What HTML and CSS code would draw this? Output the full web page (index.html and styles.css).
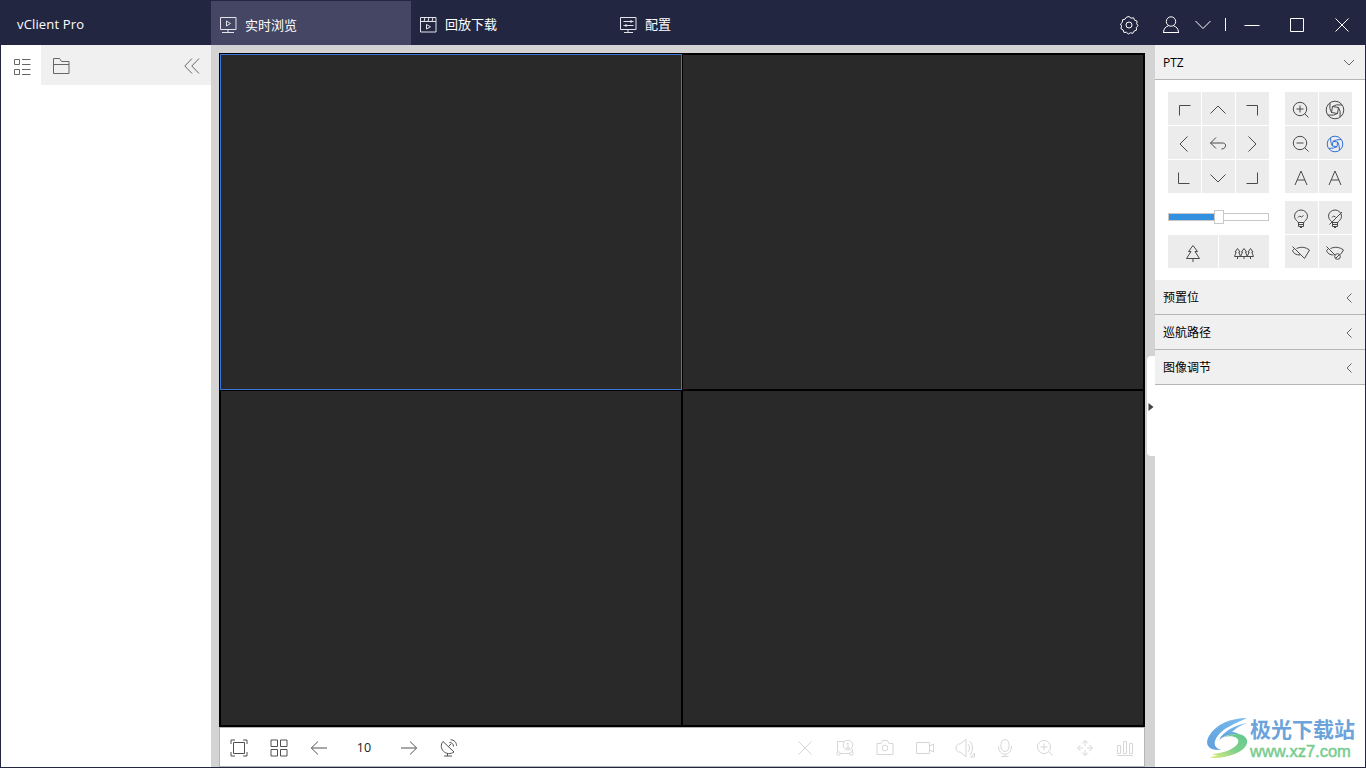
FILE: index.html
```html
<!DOCTYPE html>
<html lang="zh-CN">
<head>
    <meta charset="UTF-8">
    <title>vClient Pro</title>
    <link rel="stylesheet" href="styles.css">
</head>
<body>
<div class="window">

    <header class="titlebar">
        <div class="brand">vClient Pro</div>
        <nav class="tabs">
            <a class="tab active">
                <svg width="18" height="18" viewBox="0 0 18 18"><path d="M1.500 1.500h15.500v12h-15.500zM9 14v2M3 16.500h12M7.500 5v5l4-2.500z"/></svg>
                <span>实时浏览</span>
            </a>
            <a class="tab">
                <svg width="18" height="18" viewBox="0 0 18 18"><path d="M1.500 1.500h15.500v14.500h-15.500zM1.500 5.500h15.500M5 5.500l1-4M9 5.500l1-4M13 5.500l1-4M7.500 8.500v4.500l4-2.200z"/></svg>
                <span>回放下载</span>
            </a>
            <a class="tab">
                <svg width="18" height="18" viewBox="0 0 18 18"><path d="M1.500 1.500h15.500v12h-15.500zM9 14v2M5 16.500h9M4.500 5.500h10M4.500 9.500h10M12 4v3M7 8v3"/></svg>
                <span>配置</span>
            </a>
        </nav>
        <div class="controls">
            <svg class="gear" width="20" height="20" viewBox="0 0 20 20"><path d="M10 1.500l2 1.700 2.600-.4 1 2.400 2.500 1-.4 2.500 1.300 2-1.700 1.900.2 2.500-2.400 1-1.300 2.200-2.500-.5-2 1.200-1.800-1.700-2.600.1-.8-2.500-2.200-1.300.7-2.400-1.100-2.200 1.900-1.700.1-2.500 2.500-.6 1.500-2z"/><circle cx="10" cy="10" r="3"/></svg>
            <svg class="user" width="18" height="18" viewBox="0 0 18 18"><circle cx="9" cy="5.500" r="4.700"/><path d="M1.500 16.500c0-4 2.500-6 5-6.700M16.500 16.500c0-4-2.500-6-5-6.700M1 16.500h16"/></svg>
            <svg class="drop" width="16" height="10" viewBox="0 0 16 10"><path d="M.5 1l7.500 7.500L15.500 1"/></svg>
            <span class="divider"></span>
            <svg class="min" width="16" height="16" viewBox="0 0 16 16"><path d="M.5 8.500h15"/></svg>
            <svg class="max" width="14" height="14" viewBox="0 0 14 14"><path d="M.5 .5h13v13h-13z"/></svg>
            <svg class="close" width="14" height="14" viewBox="0 0 14 14"><path d="M.5 .5l13 13M13.500 .5l-13 13"/></svg>
        </div>
    </header>

    <div class="content">
        <aside class="devices">
            <div class="device-tabs">
                <div class="device-tab active">
                    <svg width="18" height="18" viewBox="0 0 18 18"><path d="M1.500 1.500h5v5h-5zM1.500 11.500h5v5h-5zM9 1.500h8.500M9 6.500h8.500M9 11.500h8.500M9 16.500h8.500"/></svg>
                </div>
                <div class="device-tab">
                    <svg width="18" height="18" viewBox="0 0 18 18"><path d="M1.500 16.500v-15h6l2 3h7.500v12zM1.500 7.500h15.500"/></svg>
                </div>
                <svg class="collapse" width="16" height="16" viewBox="0 0 16 16"><path d="M8 .5L.8 8l7.200 7.500M15 .5L7.800 8l7.200 7.500"/></svg>
            </div>
        </aside>

        <main class="live">
            <div class="video-grid">
                <div class="video selected"></div>
                <div class="video"></div>
                <div class="video"></div>
                <div class="video"></div>
            </div>
            <div class="toolbar">
                <div class="tools">
                    <svg width="18" height="18" viewBox="0 0 18 18"><path d="M3.500 3.500h11v11h-11zM1 5V1H5M13 1h4V5M17 13v4H13M5 17H1V13"/></svg>
                    <svg width="18" height="18" viewBox="0 0 18 18"><path d="M1 1h6.500v6.500h-6.500zM10.500 1h6.500v6.500h-6.500zM1 10.500h6.500v6.500h-6.500zM10.500 10.500h6.500v6.500h-6.500z"/></svg>
                    <svg width="18" height="18" viewBox="0 0 18 18"><path d="M17 9H1.500M8 2.500L1.300 9 8 15.500"/></svg>
                    <span class="page">10</span>
                    <svg width="18" height="18" viewBox="0 0 18 18"><path d="M1 9h15.500M10 2.500L16.700 9 10 15.500"/></svg>
                    <svg width="18" height="18" viewBox="0 0 18 18"><path d="M3 2.500C.5 5.500.8 9.500 3.500 12.300s7 3 10.500.7zM7.500 14.500v2.500M4 17h8M8.500 7.500l2.500-2.500M9.500 3.500c2.500 0 4 1.500 4 4M10.500.8c3.700 0 6 2.500 6 6"/></svg>
                </div>
                <div class="tools disabled">
                    <svg width="18" height="18" viewBox="0 0 18 18"><path d="M2.500 2.500l13 13M15.500 2.500l-13 13"/></svg>
                    <svg width="18" height="18" viewBox="0 0 18 18"><path d="M8 2.500H1.500v10M16.500 10v3M4 14.500h10M10.500 5l1.500-1v5M10 9h4"/><circle cx="12" cy="6" r="4.800"/><circle cx="2.500" cy="14.500" r="1.700"/><circle cx="15.500" cy="14.500" r="1.700"/></svg>
                    <svg width="18" height="18" viewBox="0 0 18 18"><path d="M1 4.500h4l1.500-3h5l1.500 3h4v11H1z"/><circle cx="9" cy="9" r="2.800"/></svg>
                    <svg width="20" height="18" viewBox="0 0 20 18"><path d="M1.500 3.500h13v11h-13zM14.500 7l4-2v8l-4-2z"/></svg>
                    <svg width="20" height="20" viewBox="0 0 20 20"><path d="M11 1.500v17L5 14H3.500C.2 12 .2 8 3.500 6H5zM13 6c2 2 2 6 0 8M14.500 3c4 3.500 4 10.500 0 14M19.500 15v4h-4z"/></svg>
                    <svg width="18" height="18" viewBox="0 0 18 18"><path d="M9 .5c-5.500 0-5.500 12 0 12s5.500-12 0-12zM2.500 7c0 11 13 11 13 0M9 15.500v2M5.500 17.500h7"/></svg>
                    <svg width="18" height="18" viewBox="0 0 18 18"><circle cx="8" cy="8" r="6.500"/><path d="M12.800 12.800l3.700 3.700M4.500 8h7M8 4.500v7"/></svg>
                    <svg width="18" height="18" viewBox="0 0 18 18"><path d="M9 2v5M9 11v5M2 9h5M11 9h5M6 4.500l3-3 3 3M6 13.500l3 3 3-3M4.500 6l-3 3 3 3M13.500 6l3 3-3 3"/></svg>
                    <svg width="18" height="18" viewBox="0 0 18 18"><path d="M1.500 6.500h3v8h-3zM7.500 2.500h3v12h-3zM13.500 4.500h3v10h-3zM1 16.500h16"/></svg>
                </div>
            </div>
            <div class="panel-handle">
                <svg width="6" height="8" viewBox="0 0 6 8"><path d="M.5 0v8L5.500 4z"/></svg>
            </div>
        </main>

        <aside class="side">
            <div class="section open">
                <span>PTZ</span>
                <svg width="12" height="8" viewBox="0 0 12 8"><path d="M1 1l5 5 5-5"/></svg>
            </div>
            <div class="ptz">
                <div class="ptz-left">
                    <div class="pad">
                        <button><svg viewBox="0 0 20 20"><path d="M5.500 15.500v-10h11"/></svg></button>
                        <button><svg viewBox="0 0 20 20"><path d="M2.500 13.500L10 6l7.500 7.500"/></svg></button>
                        <button><svg viewBox="0 0 20 20"><path d="M4.500 5.500h11v10"/></svg></button>
                        <button><svg viewBox="0 0 20 20"><path d="M13.500 2.500L6 10l7.500 7.500"/></svg></button>
                        <button><svg viewBox="0 0 20 20"><path d="M8 3.500L2.500 9 8 14.500M2.500 9h12c4.500 0 4 6-1 6"/></svg></button>
                        <button><svg viewBox="0 0 20 20"><path d="M6.500 2.500L14 10l-7.500 7.500"/></svg></button>
                        <button><svg viewBox="0 0 20 20"><path d="M4.500 4.500v11h11"/></svg></button>
                        <button><svg viewBox="0 0 20 20"><path d="M2.500 6.500L10 14l7.500-7.500"/></svg></button>
                        <button><svg viewBox="0 0 20 20"><path d="M4.500 15.500h11v-11"/></svg></button>
                    </div>
                    <div class="speed">
                        <div class="speed-fill"></div>
                        <div class="speed-thumb"></div>
                    </div>
                    <div class="focus">
                        <button><svg viewBox="0 0 20 20"><path d="M10 2.500L5.500 8.500H8L3.500 15.500h13L12 8.500h2.500zM10 15.500v3.500"/></svg></button>
                        <button><svg viewBox="0 0 20 20"><path d="M3.500 5.500L1 9h1.200L.5 13.500h19L17.800 9H19l-2.500-3.500L14 9h1.200l-2 4.500L11.500 9h1L10 5.500 7.500 9h1l-2 4.500L4.800 9H6zM3.500 13.500v2.500M10 13.500v2.500M16.500 13.500v2.500"/></svg></button>
                    </div>
                </div>
                <div class="ptz-right">
                    <div class="lens">
                        <button><svg viewBox="0 0 20 20"><circle cx="9" cy="9" r="6.700"/><path d="M13.700 13.700l3.800 3.800M5.500 9h7M9 5.500v7"/></svg></button>
                        <button><svg viewBox="0 0 20 20"><circle cx="10" cy="10" r="8.800"/><path d="M7.500 6.500L13.500 7.500 12.500 13.500 6.500 12.500zM7.500 6.500Q11 4 17 5M13.500 7.500Q16 11 15 17M12.500 13.500Q9 16 3 15M6.500 12.500Q4 9 5 3"/></svg></button>
                        <button><svg viewBox="0 0 20 20"><circle cx="9" cy="9" r="6.700"/><path d="M13.700 13.700l3.800 3.800M5.500 9h7"/></svg></button>
                        <button class="blue"><svg viewBox="0 0 20 20"><circle cx="10" cy="10" r="7.800"/><path d="M8 7.300L12.700 8 12 12.700 7.300 12zM8 7.300Q11 5.500 16 5.500M12.700 8Q14.500 11 14.500 16M12 12.700Q9 14.500 4 14.500M7.300 12Q5.500 9 5.500 4"/></svg></button>
                        <button><svg viewBox="0 0 20 20"><path d="M4 17L10 3l6 14M6 12h8"/></svg></button>
                        <button><svg viewBox="0 0 20 20"><path d="M4 17L10 3l6 14M6 12h8"/></svg></button>
                    </div>
                    <div class="lens">
                        <button><svg viewBox="0 0 20 20"><path d="M7 13.500c0-1.500-3.500-2.500-3.500-6.300a6.500 6.200 0 0 1 13 0c0 3.800-3.500 4.800-3.500 6.300zM7.500 13.500v4h5v-4M7.500 15.500h5M9 18.500h2M7 8.500L8.500 7l2 1L12.500 6.500"/></svg></button>
                        <button><svg viewBox="0 0 20 20"><path d="M7 13.500c0-1.500-3.500-2.500-3.500-6.300a6.500 6.200 0 0 1 13 0c0 3.800-3.500 4.800-3.500 6.300zM7.500 13.500v4h5v-4M7.500 15.500h5M9 18.500h2M7 8.500L8.500 7l2 1M17 3L4.500 15.500"/></svg></button>
                        <button><svg viewBox="0 0 20 20"><path d="M1.500 3.500l12 12M5.500 5.500c4.500-2 9-1.500 13 1.500l-5 8.500M3.500 5.500L1.500 7.500c1 3 3.500 4.500 7.500 4.500"/></svg></button>
                        <button><svg viewBox="0 0 20 20"><path d="M1.500 3.500l8.500 8.500M5.500 5.500c4.500-2 9-1.500 13 1.500L15.500 11.500M3.500 5.500L1.500 7.500c1 3 3.500 4.500 7 4.500M10.500 15.500l4-4"/><circle cx="12.500" cy="13.500" r="2.800"/></svg></button>
                    </div>
                </div>
            </div>
            <div class="section">
                <span>预置位</span>
                <svg width="8" height="12" viewBox="0 0 8 12"><path d="M6.500 1.500L2 6l4.500 4.500"/></svg>
            </div>
            <div class="section">
                <span>巡航路径</span>
                <svg width="8" height="12" viewBox="0 0 8 12"><path d="M6.500 1.500L2 6l4.500 4.500"/></svg>
            </div>
            <div class="section">
                <span>图像调节</span>
                <svg width="8" height="12" viewBox="0 0 8 12"><path d="M6.500 1.500L2 6l4.500 4.500"/></svg>
            </div>
        </aside>
    </div>

    <div class="watermark">
        <svg width="44" height="44" viewBox="0 0 44 44">
            <defs>
                <linearGradient id="sky" x1="0" y1="1" x2="1" y2="0">
                    <stop offset="0" stop-color="#5f9fdc"/>
                    <stop offset="1" stop-color="#7cbcf0"/>
                </linearGradient>
                <linearGradient id="leaf" x1="0" y1="1" x2="1" y2="0">
                    <stop offset="0" stop-color="#e4ee80"/>
                    <stop offset=".5" stop-color="#7fd08a"/>
                    <stop offset="1" stop-color="#60c890"/>
                </linearGradient>
            </defs>
            <path fill="url(#sky)" d="M41 2C25 2 10 8 3 20c-5 9 0 15 12 14-7-2-8-7-4-13C17 12 28 8 41 2z"/>
            <path fill="url(#sky)" d="M41 7c-13 2-24 9-28 17 6-5 14-7 21-5-4-3-6-3-8-3 4-4 9-7 15-9z"/>
            <path fill="url(#leaf)" d="M18 21c10-5 21-4 23 3 2 10-17 19-37 18 3-2 5-2 8-3-2 0-4 0-6-1 12-1 23-5 26-11 2-5-5-8-14-6z"/>
        </svg>
        <div class="watermark-text">
            <div class="site-name">极光下载站</div>
            <div class="site-url">www.xz7.com</div>
        </div>
    </div>
</div>
</body>
</html>
```
FILE: styles.css
```css
* {
    box-sizing: border-box;
}
body {
    margin: 0;
    font-family: "Open Sans", "Noto Sans CJK SC", sans-serif;
    font-size: 12px;
    color: #000;
}
svg {
    display: block;
    flex: none;
    fill: none;
    stroke: currentColor;
    stroke-width: 1;
}
.window {
    position: relative;
    width: 1366px;
    height: 768px;
    display: flex;
    flex-direction: column;
    background-color: white;
    border: 1px solid #232640;
    border-top: none;
    overflow: hidden;
}

/* title bar */
.titlebar {
    display: flex;
    flex: none;
    height: 45px;
    padding-top: 1px;
    background-color: #232640;
    color: white;
}
.brand {
    width: 210px;
    padding-left: 16px;
    font-size: 13px;
    line-height: 46px;
    letter-spacing: 0.15px;
}
.tabs {
    display: flex;
    flex: 1;
}
.tab {
    display: flex;
    align-items: center;
    width: 200px;
    padding: 0 8px;
    gap: 8px;
    font-size: 13px;
}
.tab svg {
    margin-top: 3px;
    color: #e4e5ec;
}
.tab.active {
    padding-top: 2px;
    background-color: #444663;
}
.tab.active svg {
    margin-top: 2px;
}
.controls {
    display: flex;
    align-items: center;
    padding: 4px 16px 0 0;
}
.user {
    margin-left: 23px;
}
.drop {
    margin-left: 15px;
}
.divider {
    width: 1px;
    height: 13px;
    margin: 0 18px 2px 14px;
    background-color: white;
}
.max {
    margin-left: 30px;
}
.close {
    margin-left: 31px;
}

.content {
    display: flex;
    flex: 1;
    min-height: 0;
}

/* device list */
.devices {
    width: 210px;
    background-color: white;
}
.device-tabs {
    display: flex;
    align-items: center;
    height: 40px;
    background-color: #f0f0f0;
    color: #666;
}
.device-tab {
    display: flex;
    align-items: center;
    justify-content: center;
    width: 40px;
    height: 40px;
    padding-top: 2px;
}
.device-tab.active {
    padding: 4px 0 0 2px;
    background-color: white;
}
.collapse {
    margin: 2px 11px 0 auto;
}

/* live view */
.live {
    position: relative;
    display: flex;
    flex-direction: column;
    width: 944px;
    padding: 8px 10px 0 8px;
    background-color: #d3d3d3;
}
.video-grid {
    display: grid;
    grid-template-columns: 462px 462px;
    grid-template-rows: 336px 336px;
    height: 674px;
    padding: 1px;
    background-color: #000;
}
.video {
    border: 1px solid #000;
    background-color: #292929;
}
.video.selected {
    border-color: #3a76d6;
}
.toolbar {
    display: flex;
    align-items: center;
    justify-content: space-between;
    flex: 1;
    padding: 2px 10px 0;
    border: 1px solid #b5b5b5;
    background-color: white;
}
.tools {
    display: flex;
    align-items: center;
    gap: 22px;
    color: #505050;
}
.tools.disabled {
    color: #d6d6d6;
}
.tools.disabled svg {
    margin: 0 -1px;
    width: 20px;
}
.page {
    width: 28px;
    padding-bottom: 1px;
    text-align: center;
    font-size: 12.5px;
    color: #222;
}
.panel-handle {
    position: absolute;
    right: 0;
    top: 311px;
    display: flex;
    align-items: center;
    width: 8px;
    height: 100px;
    padding: 2px 0 0 1px;
    border-radius: 4px 0 0 4px;
    background-color: white;
}
.panel-handle svg {
    fill: #444;
    stroke: none;
}

/* right column */
.side {
    width: 210px;
    background-color: white;
}
.section {
    display: flex;
    align-items: center;
    justify-content: space-between;
    height: 35px;
    padding: 0 12px 0 8px;
    border-bottom: 1px solid #b5b5b5;
    background-color: #f0f0f0;
}
.section svg {
    margin-top: 2px;
    color: #666;
}
.section.open {
    padding-right: 10px;
}
.ptz {
    display: flex;
    justify-content: space-between;
    height: 200px;
    padding: 12px 13px;
}
.ptz button {
    display: flex;
    align-items: center;
    justify-content: center;
    height: 33px;
    padding: 2px 1px 0 0;
    border: none;
    background-color: #ececec;
    color: #4a4a4a;
}
.ptz button svg {
    width: 20px;
    height: 20px;
}
.ptz button.blue {
    color: #3273dc;
}
.pad {
    display: grid;
    grid-template-columns: repeat(3, 33px);
    gap: 1px;
}
.lens {
    display: grid;
    grid-template-columns: 33px 33px;
    gap: 1px;
    margin-bottom: 8px;
}
.speed {
    display: flex;
    align-items: center;
    height: 8px;
    margin: 20px 0 14px;
    border: 1px solid #c8c8c8;
}
.speed-fill {
    width: 45px;
    height: 6px;
    background-color: #338fe0;
}
.speed-thumb {
    width: 10px;
    height: 14px;
    border: 1px solid #c8c8c8;
    background-color: white;
}
.focus {
    display: grid;
    grid-template-columns: 50px 50px;
    gap: 1px;
}
.focus button {
    padding-right: 0;
}

/* download site mark */
.watermark {
    position: absolute;
    right: 10px;
    bottom: 7px;
    display: flex;
    align-items: center;
}
.watermark svg {
    stroke: none;
}
.watermark-text {
    width: 105px;
}
.site-name {
    font-size: 21px;
    font-weight: bold;
    line-height: 25px;
    color: #6ba3da;
}
.site-url {
    font-family: "Liberation Sans", sans-serif;
    font-size: 16.5px;
    line-height: 18px;
    color: #78cc90;
    -webkit-text-stroke: 0.5px #78cc90;
}
```
